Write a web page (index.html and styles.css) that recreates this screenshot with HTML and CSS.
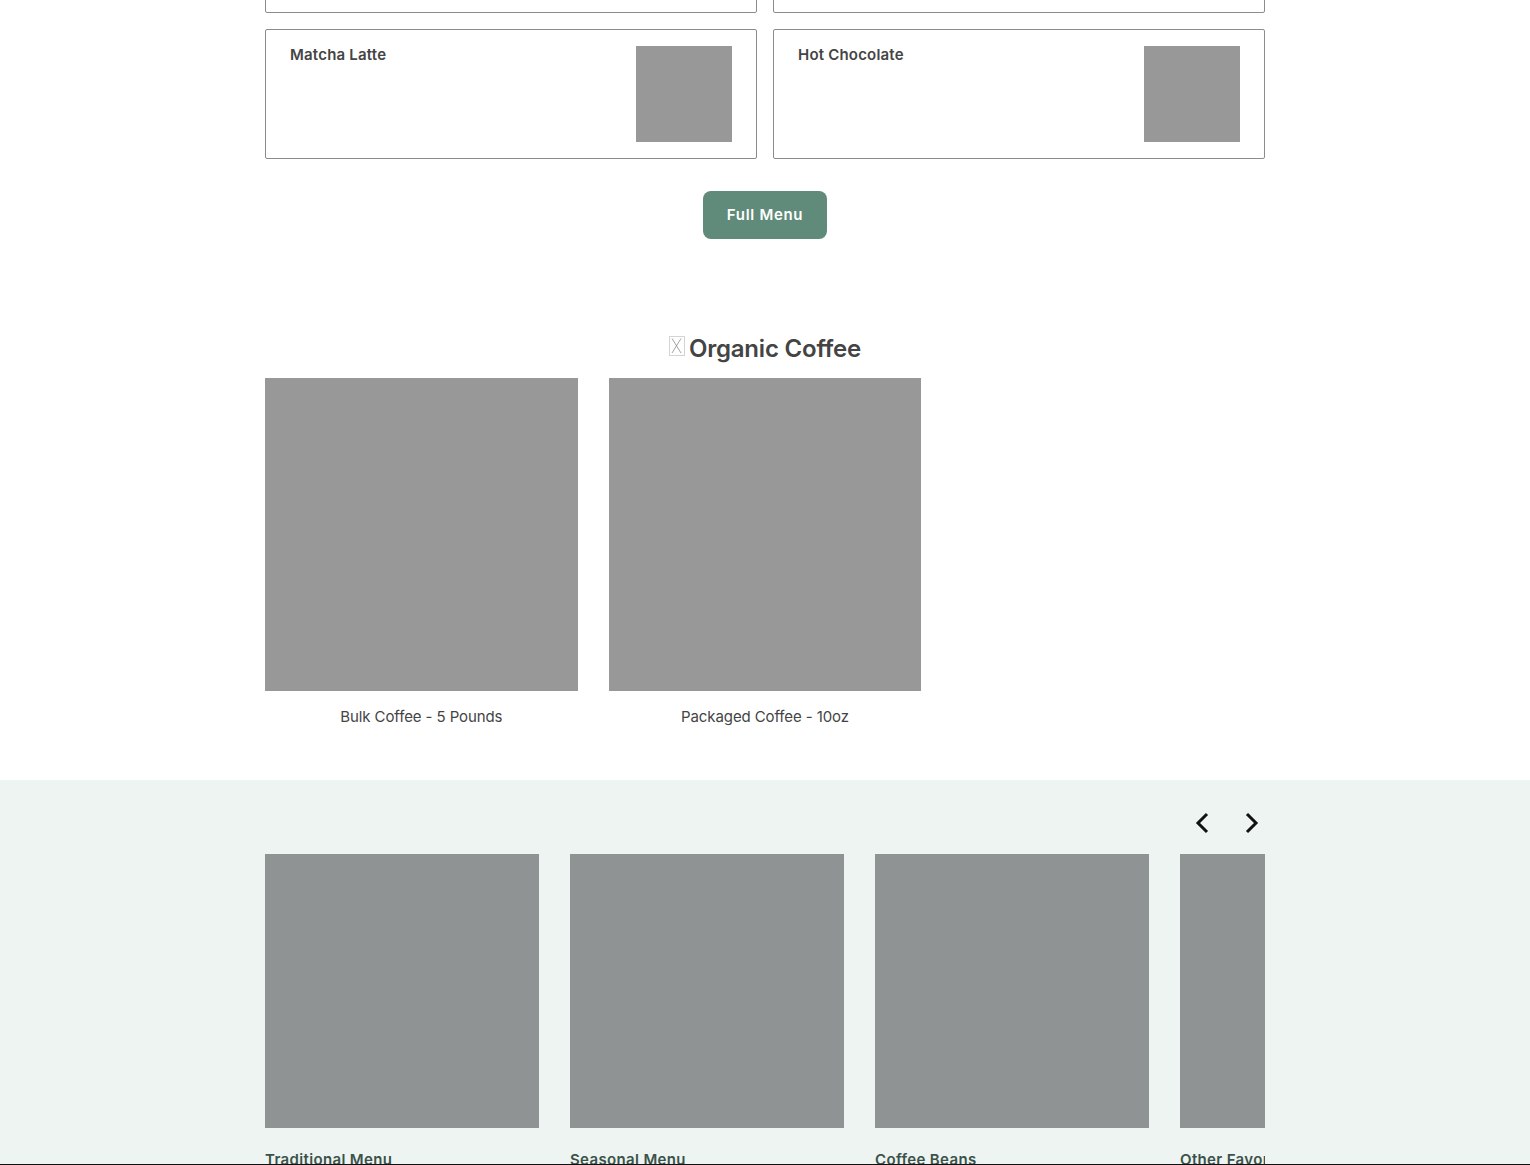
FILE: index.html
```html
<!DOCTYPE html>
<html>

<head>
    <meta charset="utf-8" />
    <title>Menu</title>
    <link rel="stylesheet" href="styles.css">
</head>

<body>
    <div class="page">
        <section class="menuSection">
            <div class="menuGrid">
                <div class="menuCard"></div>
                <div class="menuCard"></div>
                <div class="menuCard">
                    <h3>Matcha Latte</h3>
                    <div class="menuThumb"></div>
                </div>
                <div class="menuCard">
                    <h3>Hot Chocolate</h3>
                    <div class="menuThumb"></div>
                </div>
            </div>
            <a class="fullMenuBtn" href="#">Full Menu</a>
        </section>

        <section class="organicSection">
            <h2 class="organicTitle">
                <svg class="brokenIcon" width="16" height="20" viewBox="0 0 16 20">
                    <rect x="0.5" y="0.5" width="15" height="19" fill="#fff" stroke="#d4d4d4" />
                    <path d="M3 2.5 L12 17 M12 2.5 L3 17" fill="none" stroke="#8a8a8a" stroke-width="0.8" />
                </svg>
                Organic Coffee
            </h2>
            <div class="productGrid">
                <div class="product">
                    <div class="productImg"></div>
                    <p>Bulk Coffee - 5 Pounds</p>
                </div>
                <div class="product">
                    <div class="productImg"></div>
                    <p>Packaged Coffee - 10oz</p>
                </div>
            </div>
        </section>

        <section class="carouselSection">
            <div class="carouselWrap">
                <div class="carouselNav">
                    <svg width="24" height="24" viewBox="0 0 24 24">
                        <path d="M16 3 L7 12 L16 21" fill="none" stroke="#111" stroke-width="3" />
                    </svg>
                    <svg width="24" height="24" viewBox="0 0 24 24">
                        <path d="M8 3 L17 12 L8 21" fill="none" stroke="#111" stroke-width="3" />
                    </svg>
                </div>
                <div class="carouselTrack">
                    <div class="slide">
                        <div class="slideImg"></div>
                        <h4>Traditional Menu</h4>
                    </div>
                    <div class="slide">
                        <div class="slideImg"></div>
                        <h4>Seasonal Menu</h4>
                    </div>
                    <div class="slide">
                        <div class="slideImg"></div>
                        <h4>Coffee Beans</h4>
                    </div>
                    <div class="slide">
                        <div class="slideImg"></div>
                        <h4>Other Favorites</h4>
                    </div>
                </div>
            </div>
        </section>
    </div>
    <div class="bottomLine"></div>
</body>

</html>
```

FILE: styles.css
```css
* {
    box-sizing: border-box;
}

h2,
h3,
h4,
p,
body {
    margin: 0px;
    padding: 0px;
}

html,
body {
    height: 1165px;
    overflow: hidden;
}

body {
    font-family: Inter, "Liberation Sans", sans-serif;
    background-color: #fff;
    color: #444;
}

.page {
    margin-top: -117px;
}

.menuSection {
    width: 1000px;
    margin: 0px auto;
}

.menuGrid {
    display: grid;
    grid-template-columns: 1fr 1fr;
    gap: 16px;
}

.menuCard {
    height: 130px;
    padding: 16px 24px;
    border: 1px solid #8c8c8c;
    border-radius: 2px;
    display: flex;
    justify-content: space-between;
}

.menuCard h3 {
    font-size: 15px;
    line-height: 18px;
    font-weight: 600;
    letter-spacing: 0.2px;
}

.menuThumb {
    width: 96px;
    height: 96px;
    background-color: #989898;
}

.fullMenuBtn {
    display: block;
    width: 124px;
    height: 48px;
    margin: 32px auto 0px;
    background-color: #608a7a;
    border-radius: 8px;
    color: #fff;
    font-size: 15px;
    font-weight: 600;
    letter-spacing: 0.7px;
    line-height: 48px;
    text-align: center;
    text-decoration: none;
}

.organicSection {
    width: 1000px;
    margin: 0px auto;
    padding-top: 94px;
}

.organicTitle {
    display: flex;
    justify-content: center;
    align-items: flex-start;
    gap: 4px;
    height: 45px;
    font-size: 24px;
    line-height: 32px;
    font-weight: 600;
    letter-spacing: -0.2px;
}

.brokenIcon {
    margin-top: 3px;
}

.productGrid {
    display: grid;
    grid-template-columns: repeat(3, 1fr);
    gap: 31px;
}

.productImg {
    height: 313px;
    background-color: #989898;
}

.product p {
    margin-top: 16px;
    font-size: 15px;
    line-height: 20px;
    letter-spacing: -0.1px;
    text-align: center;
}

.carouselSection {
    margin-top: 53px;
    padding-top: 27px;
    height: 400px;
    background-color: #eef4f2;
}

.carouselWrap {
    width: 1000px;
    margin: 0px auto;
}

.carouselNav {
    display: flex;
    justify-content: flex-end;
    gap: 24px;
    height: 47px;
    padding-right: 2px;
    padding-top: 4px;
}

.carouselTrack {
    display: flex;
    gap: 31px;
    overflow: hidden;
}

.slide {
    flex: 0 0 274px;
}

.slideImg {
    height: 274px;
    background-color: #8f9393;
}

.slide h4 {
    margin-top: 22px;
    font-size: 15px;
    line-height: 20px;
    font-weight: 600;
    letter-spacing: 0.35px;
    color: #3a5249;
    white-space: nowrap;
}

.bottomLine {
    position: fixed;
    left: 0px;
    right: 0px;
    bottom: 0px;
    height: 1px;
    background-color: #111;
}
```
